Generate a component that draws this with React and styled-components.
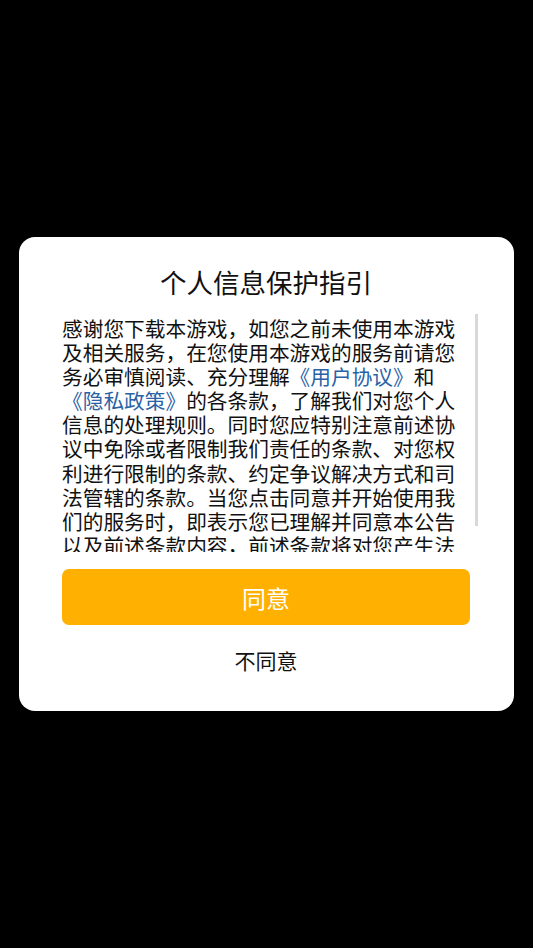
import React from "react";
import styled, { createGlobalStyle } from "styled-components";

const Global = createGlobalStyle`
  html, body { margin: 0; padding: 0; background: #000; }
  body { font-family: "Noto Sans CJK SC", "Noto Sans", sans-serif; }
  * { box-sizing: border-box; }
`;

const Screen = styled.div`
  min-height: 100vh;
  display: flex;
  align-items: center;
  justify-content: center;
  padding: 0 19px;
`;

const Card = styled.div`
  width: 100%;
  background: #fff;
  border-radius: 16px;
  padding: 28px 44px 36px 43px;
  display: flex;
  flex-direction: column;
`;

const Title = styled.h1`
  margin: 0;
  font-size: 26.5px;
  line-height: 34px;
  font-weight: 400;
  color: #111;
  text-align: center;
`;

const ScrollWrap = styled.div`
  position: relative;
  margin-top: 16px;
  width: 416px;
`;

const Scroll = styled.div`
  height: 237px;
  overflow-y: auto;
  padding-top: 1px;
  padding-right: 13px;
  scrollbar-width: none;
  &::-webkit-scrollbar { display: none; }
`;

const Thumb = styled.div`
  position: absolute;
  top: -1px;
  right: 0;
  width: 3px;
  height: 212px;
  background: #d8d8d8;
`;

const Body = styled.p`
  margin: 0;
  font-size: 20.7px;
  line-height: 24.1px;
  color: #111;
  line-break: strict;
`;

const Link = styled.span`
  color: #2a62a6;
`;

const AgreeButton = styled.button`
  margin-top: 17px;
  height: 56px;
  border: none;
  border-radius: 7px;
  background: #ffb000;
  color: #fff;
  font-family: inherit;
  font-size: 24px;
  cursor: pointer;
`;

const DeclineButton = styled.button`
  margin-top: 20px;
  border: none;
  background: transparent;
  color: #111;
  font-family: inherit;
  font-size: 21px;
  line-height: 30px;
  padding: 0;
  cursor: pointer;
`;

export default function App() {
  return (
    <>
      <Global />
      <Screen>
        <Card>
          <Title>个人信息保护指引</Title>
          <ScrollWrap>
            <Scroll>
              <Body>
                感谢您下载本游戏，如您之前未使用本游戏及相关服务，在您使用本游戏的服务前请您务必审慎阅读、充分理解
                <Link>《用户协议》</Link>和<Link>《隐私政策》</Link>
                的各条款，了解我们对您个人信息的处理规则。同时您应特别注意前述协议中免除或者限制我们责任的条款、对您权利进行限制的条款、约定争议解决方式和司法管辖的条款。当您点击同意并开始使用我们的服务时，即表示您已理解并同意本公告以及前述条款内容，前述条款将对您产生法律约束力。
              </Body>
            </Scroll>
            <Thumb />
          </ScrollWrap>
          <AgreeButton>同意</AgreeButton>
          <DeclineButton>不同意</DeclineButton>
        </Card>
      </Screen>
    </>
  );
}
